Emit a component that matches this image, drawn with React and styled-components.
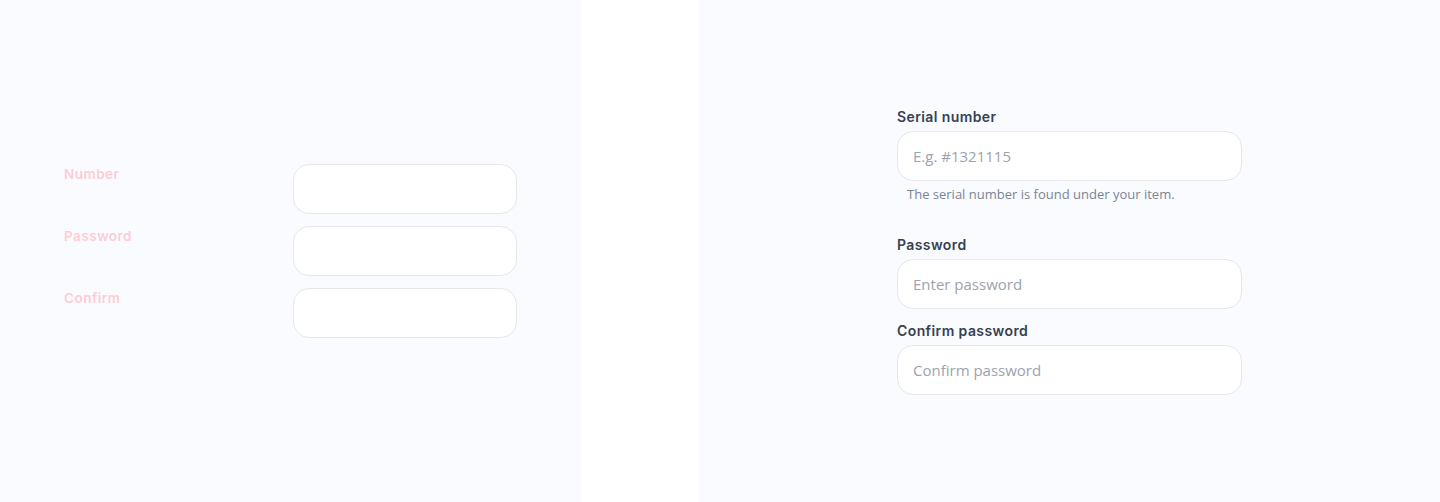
import styled, { createGlobalStyle } from "styled-components";

const GlobalStyle = createGlobalStyle`
  html, body {
    margin: 0;
    padding: 0;
    background: #ffffff;
  }
  * {
    box-sizing: border-box;
  }
`;

const leftRows = ["Number", "Password", "Confirm"];

const rightFields = [
  {
    label: "Serial number",
    placeholder: "E.g. #1321115",
    hint: "The serial number is found under your item.",
  },
  { label: "Password", placeholder: "Enter password" },
  { label: "Confirm password", placeholder: "Confirm password" },
];

export default function App() {
  return (
    <>
      <GlobalStyle />
      <Page>
        <Panel>
          <CompactForm>
            {leftRows.map((name) => (
              <CompactRow key={name}>
                <PinkLabel>{name}</PinkLabel>
                <SmallInput />
              </CompactRow>
            ))}
          </CompactForm>
        </Panel>
        <Panel>
          <StackForm>
            {rightFields.map((f) => (
              <Field key={f.label} $spaced={!!f.hint}>
                <Label>{f.label}</Label>
                <Input placeholder={f.placeholder} />
                {f.hint && <Hint>{f.hint}</Hint>}
              </Field>
            ))}
          </StackForm>
        </Panel>
      </Page>
    </>
  );
}

const Page = styled.div`
  display: grid;
  grid-template-columns: 581px 1fr;
  column-gap: 118px;
  height: 502px;
  background: #ffffff;
`;

const Panel = styled.section`
  background: #f9fbff;
  display: flex;
  align-items: center;
  justify-content: center;
`;

const CompactForm = styled.div`
  width: 100%;
  padding: 0 64px;
  display: flex;
  flex-direction: column;
  gap: 12px;
`;

const CompactRow = styled.div`
  display: grid;
  grid-template-columns: 1fr 224px;
  align-items: start;
`;

const PinkLabel = styled.label`
  font-family: Inter, "Noto Sans", sans-serif;
  font-weight: 600;
  font-size: 13.5px;
  letter-spacing: 0.5px;
  line-height: 20px;
  color: #fecdd3;
`;

const SmallInput = styled.input`
  width: 224px;
  height: 50px;
  border: 1px solid #e5e7eb;
  border-radius: 16px;
  background: #ffffff;
  outline: none;
`;

const StackForm = styled.div`
  width: 345px;
  display: flex;
  flex-direction: column;
`;

const Field = styled.div`
  display: flex;
  flex-direction: column;
  margin-bottom: ${(p) => (p.$spaced ? "32px" : "12px")};
  &:last-child {
    margin-bottom: 0;
  }
`;

const Label = styled.label`
  font-family: Inter, "Noto Sans", sans-serif;
  font-weight: 600;
  font-size: 14px;
  letter-spacing: 0.4px;
  line-height: 20px;
  color: #374151;
  margin-bottom: 4px;
`;

const Input = styled.input`
  width: 345px;
  height: 50px;
  padding: 0 15px;
  border: 1px solid #e5e7eb;
  border-radius: 16px;
  background: #ffffff;
  font-family: "Open Sans", "Noto Sans", sans-serif;
  font-size: 15px;
  color: #374151;
  outline: none;
  &::placeholder {
    color: #9ca3af;
  }
`;

const Hint = styled.p`
  margin: 4px 0 0 10px;
  font-family: "Open Sans", "Noto Sans", sans-serif;
  font-size: 13px;
  line-height: 18px;
  color: #7b8494;
`;
